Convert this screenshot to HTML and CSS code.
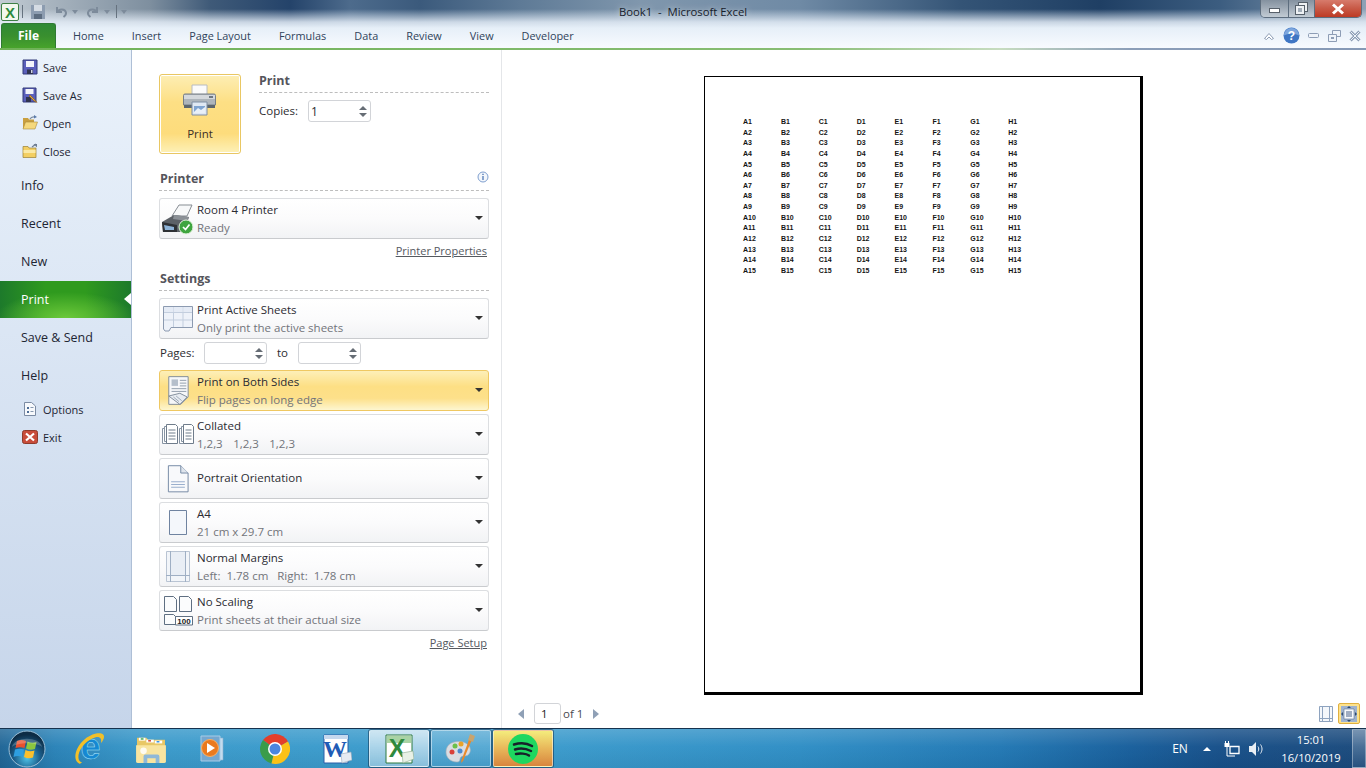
FILE: index.html
```html
<!DOCTYPE html>
<html lang="en">
  <head>
    <meta charset="UTF-8" />
    <meta name="viewport" content="width=device-width, initial-scale=1.0" />
    <title>Book1 - Microsoft Excel</title>
    <link rel="stylesheet" href="styles.css">
  </head>
  <body>
    <div class="window">
      <header class="chrome">
        <div class="titlebar">
          <div class="qat">
            <svg class="qat-logo" width="18" height="18" viewBox="0 0 18 18"><rect x=".5" y=".5" width="17" height="17" rx="1.5" fill="#f2f7ee" stroke="#3d7f45"/><text x="9" y="14.500" text-anchor="middle" class="logo-x">X</text></svg>
            <span class="qat-sep"></span>
            <svg class="qat-save" width="16" height="16" viewBox="0 0 16 16"><path d="M1 1h14v14H1z" fill="#8c9cb0"/><path d="M4 1h8v6H4z" fill="#d5dce4"/><path d="M4 10h8v5H4z" fill="#5d6d80"/></svg>
            <svg class="qat-gap" width="14" height="14" viewBox="0 0 14 14"><path d="M3 2v5h5M3.500 7C5 3.500 11 3.500 12 7.500 12.300 9.500 11 11 9.500 12" fill="none" stroke="#7d8b9b" stroke-width="2"/></svg>
            <span class="qat-caret"></span>
            <svg class="qat-gap" width="14" height="14" viewBox="0 0 14 14"><path d="M11 2v5H6M10.500 7C9 3.500 3 3.500 2 7.500 1.700 9.500 3 11 4.500 12" fill="none" stroke="#7d8b9b" stroke-width="2"/></svg>
            <span class="qat-caret"></span>
            <span class="qat-sep qat-sep-end"></span>
            <span class="qat-caret"></span>
          </div>
          <div class="title-text">Book1 &nbsp;-&nbsp; Microsoft Excel</div>
          <div class="win-buttons">
            <div class="win-btn win-min"><span class="min-bar"></span></div>
            <div class="win-btn win-max"><span class="max-back"></span><span class="max-front"></span></div>
            <div class="win-btn win-close"><svg width="14" height="12" viewBox="0 0 14 12"><path d="M2 1.500l10 9M12 1.500l-10 9" stroke="#fff" stroke-width="3"/></svg></div>
          </div>
        </div>
        <nav class="tabs">
          <div class="file-tab">File</div>
          <div class="tab-list">
            <span>Home</span><span>Insert</span><span>Page Layout</span><span>Formulas</span><span>Data</span><span>Review</span><span>View</span><span>Developer</span>
          </div>
          <div class="ribbon-tools">
            <svg width="12" height="10" viewBox="0 0 12 10"><path d="M1.500 7.500L6 2.500l4.500 5-2 1L6 6 3.500 8.500z" fill="#fff" stroke="#8d9db5"/></svg>
            <svg width="17" height="17" viewBox="0 0 17 17"><circle cx="8.500" cy="8.500" r="8" fill="#3f76c4"/><path d="M1 8.500a7.500 7.500 0 0 1 15 0c-4-2.500-11-2.500-15 0z" fill="#7ea6dd"/><text x="8.500" y="13" text-anchor="middle" class="help-q">?</text></svg>
            <svg width="12" height="8" viewBox="0 0 12 8"><rect x=".5" y="1.500" width="10" height="4" rx="1" fill="#eef3f9" stroke="#8d9db5"/></svg>
            <svg width="13" height="12" viewBox="0 0 13 12"><path d="M4.500.5h8v6h-8z" fill="#eef3f9" stroke="#8d9db5"/><path d="M.5 4.500h8v7h-8z" fill="#eef3f9" stroke="#8d9db5"/><path d="M3 7h3v2H3z" fill="#8d9db5"/></svg>
            <svg width="12" height="12" viewBox="0 0 12 12"><path d="M1.500 1.500l9 9M10.500 1.500l-9 9" stroke="#8d9db5" stroke-width="3"/><path d="M1.500 1.500l9 9M10.500 1.500l-9 9" stroke="#eef3f9"/></svg>
          </div>
        </nav>
      </header>

      <main class="backstage">
        <aside class="side-nav">
          <a class="nav-small"><svg width="16" height="16" viewBox="0 0 16 16"><path d="M1 1h14v14H1z" fill="#5b5fbb" stroke="#333a78"/><path d="M4 2h8v6H4z" fill="#f3f4fa"/><path d="M5 10.500h6V15H5z" fill="#30344f"/><path d="M9 11h1.500v3H9z" fill="#cfd2e6"/></svg>Save</a>
          <a class="nav-small"><svg width="16" height="16" viewBox="0 0 16 16"><path d="M1 1h13v14H1z" fill="#5b5fbb" stroke="#333a78"/><path d="M3.500 2h8v5h-8z" fill="#f3f4fa"/><path d="M4 10h5v5H4z" fill="#30344f"/><path d="M8 8l5 5 2 2.500-3-1.500-5-5z" fill="#e0a63c" stroke="#8a5a1c" stroke-width=".6"/></svg>Save As</a>
          <a class="nav-small"><svg width="16" height="16" viewBox="0 0 16 16"><path d="M1 3h5l1 1.500h5V13H1z" fill="#c99f3f"/><path d="M3.500 7H15.500L13 14H1z" fill="#f5d87c" stroke="#a98a3a" stroke-width=".6"/><path d="M8 4c1-2 3-2.500 5-2" fill="none" stroke="#7a8aa0" stroke-width="1.200"/><path d="M12 0l3 2-3 1.500z" fill="#5a7aa8"/></svg>Open</a>
          <a class="nav-small"><svg width="16" height="16" viewBox="0 0 16 16"><path d="M1 3.500h5L7 5h7v9.500H1z" fill="#f3cf63" stroke="#9a8033" stroke-width=".7"/><path d="M1.500 7h12v3h-12z" fill="#fae9a6"/><path d="M10 4l4-3" stroke="#6e7d92" stroke-width="1.200"/><path d="M11.500 1H15v3.500z" fill="#6e7d92"/></svg>Close</a>
          <a class="nav-big">Info</a>
          <a class="nav-big">Recent</a>
          <a class="nav-big">New</a>
          <a class="nav-big nav-active">Print</a>
          <a class="nav-big">Save &amp; Send</a>
          <a class="nav-big">Help</a>
          <a class="nav-small nav-first"><svg width="16" height="16" viewBox="0 0 16 16"><path d="M2.500 1.500h7l4 3.500v9.500h-11z" fill="#f7f9fc" stroke="#7b8ba3"/><path d="M5 6h2v2H5zM5 10h2v2H5z" fill="#4d6d96"/><path d="M8.500 6.500h3M8.500 10.500h3" stroke="#8798af"/></svg>Options</a>
          <a class="nav-small"><svg width="16" height="16" viewBox="0 0 16 16"><rect x=".5" y="1.500" width="15" height="13" rx="2" fill="#c84c3a" stroke="#8e3b2b"/><path d="M4 4.500l8 7M12 4.500l-8 7" stroke="#fff" stroke-width="2.200"/></svg>Exit</a>
        </aside>

        <section class="options-panel">
          <div class="print-row">
            <button class="print-button" type="button">
              <svg width="34" height="32" viewBox="0 0 34 32"><path d="M9 1h15v10H9z" fill="#fbfbfb" stroke="#b8bcc2"/><path d="M2 10h29a1.500 1.500 0 0 1 1.500 1.500V21H.5v-9.500A1.500 1.500 0 0 1 2 10z" fill="#aeb5bb" stroke="#777f86"/><path d="M1 11h31v4H1z" fill="#d4d8dc"/><path d="M1 21h31v3H1z" fill="#5d666d"/><path d="M26 12h4v2h-4z" fill="#6d7780"/><path d="M9 18h15v13H9z" fill="#dfe8f3" stroke="#7e8ea3"/><path d="M11 22h11v7H11z" fill="#7fa4d1"/><path d="M11 28l4-4 3 2 4-3v6H11z" fill="#e9f0f8"/></svg>
              <span>Print</span>
            </button>
            <div class="print-side">
              <h3 class="section-title">Print</h3>
              <div class="copies-row">
                <label>Copies:</label>
                <div class="spin-box"><span class="spin-value">1</span><span class="spin-arrows"><i class="up"></i><i class="down"></i></span></div>
              </div>
            </div>
          </div>

          <h3 class="section-title title-info section-printer">Printer
            <svg width="12" height="12" viewBox="0 0 12 12"><circle cx="6" cy="6" r="5" fill="#f3f7fc" stroke="#7f9fcf"/><path d="M6 5v4" stroke="#4f78b5" stroke-width="1.300"/><path d="M5.300 2.700h1.400V4H5.300z" fill="#4f78b5"/></svg>
          </h3>
          <div class="drop drop-first">
            <span class="drop-slot"><svg width="34" height="32" viewBox="0 0 34 32"><path d="M11 13L18 2h13l-5 11z" fill="#f7f8f9" stroke="#878d93"/><path d="M1 19l12-7 15 2-3 9-5 6H2z" fill="#5c6167"/><path d="M1 19l15 3v7H2z" fill="#2e3135"/><path d="M3 22l10 2v3H4z" fill="#8db3d8"/><path d="M13 12l15 2-2 4-14-2z" fill="#8b9096"/><circle cx="25" cy="24" r="7" fill="#3fa53f" stroke="#e4f2de"/><path d="M22 24l2.500 2.500 4-5" fill="none" stroke="#fff" stroke-width="1.700"/></svg></span>
            <div class="drop-text"><b>Room 4 Printer</b><small>Ready</small></div>
            <span class="caret"></span>
          </div>
          <div class="link-row"><a>Printer Properties</a></div>

          <h3 class="section-title section-settings">Settings</h3>
          <div class="drop drop-first">
            <span class="drop-slot"><svg width="30" height="26" viewBox="0 0 30 26"><path d="M.5.500h29v21H8l-2 3.500H2l-1.500-2z" fill="#eef2f9" stroke="#8c9ab0"/><path d="M1 6.500h28M1 14h28M10.500 1v20M20 1v20" stroke="#c3cede"/><path d="M1 1h28v5H1z" fill="#dfe6f1" opacity=".6"/></svg></span>
            <div class="drop-text"><b>Print Active Sheets</b><small>Only print the active sheets</small></div>
            <span class="caret"></span>
          </div>
          <div class="pages-row">
            <label>Pages:</label>
            <div class="spin-box"><span class="spin-value"></span><span class="spin-arrows"><i class="up"></i><i class="down"></i></span></div>
            <label class="to-label">to</label>
            <div class="spin-box"><span class="spin-value"></span><span class="spin-arrows"><i class="up"></i><i class="down"></i></span></div>
          </div>
          <div class="drop drop-hot">
            <span class="drop-slot"><svg width="24" height="31" viewBox="0 0 26 32"><path d="M3 1h21v22l-8 8H3z" fill="#f6f7f9" stroke="#7c8896"/><path d="M6 4h7v7H6z" fill="#b5bfcb"/><path d="M15 5h7M15 8h7M15 11h7M6 14h16M6 17h16" stroke="#8d99a8"/><path d="M3 22l12-3 8 4-8 8z" fill="#e8ecf1" stroke="#7c8896"/><path d="M8 23l6 5M11 22l6 5" stroke="#9aa6b5"/></svg></span>
            <div class="drop-text"><b>Print on Both Sides</b><small>Flip pages on long edge</small></div>
            <span class="caret"></span>
          </div>
          <div class="drop">
            <span class="drop-slot"><svg width="32" height="22" viewBox="0 0 32 22"><path d="M.5 4.500h11v15H.5z" fill="#fff" stroke="#8794a3"/><path d="M2.500 2.500h11v15h-11z" fill="#fff" stroke="#8794a3"/><path d="M4.500.5h9l2 2v17h-11z" fill="#fff" stroke="#6f7c8b"/><path d="M6.500 6h7M6.500 9h7M6.500 12h7M6.500 15h7" stroke="#6f7c8b"/><path d="M17.500 4.500h9v15h-9z" fill="#fff" stroke="#8794a3"/><path d="M19.500 2.500h9v15h-9z" fill="#fff" stroke="#8794a3"/><path d="M21.500.5h8l2 2v17h-10z" fill="#fff" stroke="#6f7c8b"/><path d="M23.500 6h6M23.500 9h6M23.500 12h6M23.500 15h6" stroke="#6f7c8b"/></svg></span>
            <div class="drop-text"><b>Collated</b><small class="collated">1,2,3 &nbsp; 1,2,3 &nbsp; 1,2,3</small></div>
            <span class="caret"></span>
          </div>
          <div class="drop">
            <span class="drop-slot"><svg width="22" height="30" viewBox="0 0 24 30"><path d="M1.500.5H15l8 8v20.500H1.500z" fill="#f8f9fb" stroke="#6f83a0"/><path d="M15 .5v8h8" fill="#dfe5ed" stroke="#6f83a0"/><path d="M4.500 18h15M4.500 21h15M4.500 24h15" stroke="#90a7c8"/></svg></span>
            <div class="drop-text drop-single"><b>Portrait Orientation</b></div>
            <span class="caret"></span>
          </div>
          <div class="drop">
            <span class="drop-slot"><svg width="18" height="25" viewBox="0 0 18 25"><path d="M.5.5h17v24H.5z" fill="#f4f7fb" stroke="#6f83a0"/></svg></span>
            <div class="drop-text"><b>A4</b><small>21 cm x 29.7 cm</small></div>
            <span class="caret"></span>
          </div>
          <div class="drop">
            <span class="drop-slot"><svg width="24" height="31" viewBox="0 0 24 31"><path d="M.5.500h23v30H.5z" fill="#f2f5f9" stroke="#b9c4d3"/><path d="M5 1h14v23H5z" fill="#e9eef5"/><path d="M4.500 0v31M19.500 0v31M0 24.500h24" stroke="#9fafc4"/></svg></span>
            <div class="drop-text"><b>Normal Margins</b><small>Left: &nbsp;1.78 cm &nbsp; Right: &nbsp;1.78 cm</small></div>
            <span class="caret"></span>
          </div>
          <div class="drop">
            <span class="drop-slot"><svg width="29" height="30" viewBox="0 0 29 30"><path d="M.5.500h9l3 3v12H.5zM15.500.500h9l3 3v12h-12zM.5 18.500h9l3 3v7H.5z" fill="#fbfcfd" stroke="#5f6f82"/><path d="M11.500 20.500h17v8.500h-17z" fill="#fff" stroke="#5f6f82"/><text x="20" y="28" text-anchor="middle" class="scale-text">100</text></svg></span>
            <div class="drop-text"><b>No Scaling</b><small>Print sheets at their actual size</small></div>
            <span class="caret"></span>
          </div>
          <div class="link-row"><a>Page Setup</a></div>
        </section>

        <section class="preview">
          <div class="sheet">
            <div class="cells">
              <span>A1</span><span>B1</span><span>C1</span><span>D1</span><span>E1</span><span>F1</span><span>G1</span><span>H1</span>
              <span>A2</span><span>B2</span><span>C2</span><span>D2</span><span>E2</span><span>F2</span><span>G2</span><span>H2</span>
              <span>A3</span><span>B3</span><span>C3</span><span>D3</span><span>E3</span><span>F3</span><span>G3</span><span>H3</span>
              <span>A4</span><span>B4</span><span>C4</span><span>D4</span><span>E4</span><span>F4</span><span>G4</span><span>H4</span>
              <span>A5</span><span>B5</span><span>C5</span><span>D5</span><span>E5</span><span>F5</span><span>G5</span><span>H5</span>
              <span>A6</span><span>B6</span><span>C6</span><span>D6</span><span>E6</span><span>F6</span><span>G6</span><span>H6</span>
              <span>A7</span><span>B7</span><span>C7</span><span>D7</span><span>E7</span><span>F7</span><span>G7</span><span>H7</span>
              <span>A8</span><span>B8</span><span>C8</span><span>D8</span><span>E8</span><span>F8</span><span>G8</span><span>H8</span>
              <span>A9</span><span>B9</span><span>C9</span><span>D9</span><span>E9</span><span>F9</span><span>G9</span><span>H9</span>
              <span>A10</span><span>B10</span><span>C10</span><span>D10</span><span>E10</span><span>F10</span><span>G10</span><span>H10</span>
              <span>A11</span><span>B11</span><span>C11</span><span>D11</span><span>E11</span><span>F11</span><span>G11</span><span>H11</span>
              <span>A12</span><span>B12</span><span>C12</span><span>D12</span><span>E12</span><span>F12</span><span>G12</span><span>H12</span>
              <span>A13</span><span>B13</span><span>C13</span><span>D13</span><span>E13</span><span>F13</span><span>G13</span><span>H13</span>
              <span>A14</span><span>B14</span><span>C14</span><span>D14</span><span>E14</span><span>F14</span><span>G14</span><span>H14</span>
              <span>A15</span><span>B15</span><span>C15</span><span>D15</span><span>E15</span><span>F15</span><span>G15</span><span>H15</span>
            </div>
          </div>
          <div class="preview-footer">
            <div class="pager">
              <i class="page-prev"></i>
              <span class="page-input">1</span>
              <span>of 1</span>
              <i class="page-next"></i>
            </div>
            <div class="view-icons">
              <svg width="14" height="16" viewBox="0 0 14 16"><path d="M.5.5h13v15H.5z" fill="#f4f7fb" stroke="#8ea3bf"/><path d="M3.500 0v16M10.500 0v16M0 12.500h14" stroke="#8ea3bf"/></svg>
              <div class="view-active"><svg width="18" height="16" viewBox="0 0 18 16"><path d="M1 0h16v16H1z" fill="#9eb2ce"/><path d="M4 3h10v10H4z" fill="#f7f9fc" stroke="#5d7292" stroke-width=".6"/><path d="M6 6h6M6 8h6M6 10h6" stroke="#4a6388"/><path d="M9 0l2 2H7zM9 16l2-2H7zM1 8l2-2v4zM17 8l-2-2v4z" fill="#2f4a6f"/></svg></div>
            </div>
          </div>
        </section>
      </main>

      <footer class="taskbar">
        <div class="start-orb">
          <svg width="38" height="38" viewBox="0 0 38 38"><defs><radialGradient id="orb" cx="50%" cy="75%" r="65%"><stop offset="0" stop-color="#4fc3e8"/><stop offset=".55" stop-color="#1c5f8c"/><stop offset="1" stop-color="#0d2c45"/></radialGradient></defs><circle cx="19" cy="19" r="18" fill="url(#orb)" stroke="#9cc0d8"/><path d="M9 11c3-1.500 6-1.500 9 0l-1.500 7c-3-1-6-1-9 0z" fill="#e8502e"/><path d="M19.500 11.500c3 1.500 6 1.500 9 .5L27 19c-3 1-6 1-9-.5z" fill="#8cc63f"/><path d="M7 19.500c3-1 6-1 9 0L14.500 27c-3-1.500-6-1.500-9 0z" fill="#2e9ee0"/><path d="M17.500 20c3 1.500 6 1.500 9 .5L25 27.500c-3 1-6 1-9-.5z" fill="#fbc02d"/><path d="M4 17C6 6 32 6 34 17 28 12 10 12 4 17z" fill="#fff" opacity=".22"/></svg>
        </div>
        <div class="pin">
          <svg class="ie-icon" width="30" height="31" viewBox="0 0 30 31"><text x="16.500" y="26" text-anchor="middle" class="ie-e">e</text><path d="M5 30.500C-2 26 2 13 11 6 19-.5 28-1 29.500 2 31 4 29 8 27 10 28 6 26 3 21 4.500 14 6.500 6 14 4.500 22 4 26 5 28.500 8 29.500 7 30.500 6 31 5 30.500z" fill="#f2c029"/></svg>
        </div>
        <div class="pin">
          <svg width="32" height="28" viewBox="0 0 32 30"><path d="M1 3h10l2 2h18v23H1z" fill="#e8c766"/><path d="M3 3h7v3H3z" fill="#fff"/><path d="M5 3.500h3v1.500H5z" fill="#3aa64a"/><path d="M11 5h8v3h-8z" fill="#fff"/><path d="M13 5.500h3V7h-3z" fill="#d23a2a"/><path d="M20 6h8v3h-8z" fill="#fff"/><path d="M22 6.500h3V8h-3z" fill="#2e8de0"/><path d="M0 11h32v17a2 2 0 0 1-2 2H2a2 2 0 0 1-2-2z" fill="#f8e4a0"/><path d="M8 30v-7a2 2 0 0 1 2-2h13a2 2 0 0 1 2 2v7h-4v-5H12v5z" fill="#8fb8d8"/><circle cx="8" cy="17" r="3.500" fill="#fff" opacity=".85"/></svg>
        </div>
        <div class="pin">
          <svg width="26" height="28" viewBox="0 0 26 28"><path d="M18 3h5v22h-5z" fill="#c4dcee" stroke="#8ab0cc" stroke-width=".6"/><path d="M1 1h19v25H1z" fill="#74a7d0" stroke="#a9cce6"/><circle cx="10" cy="13" r="8.500" fill="#ea7a1f" stroke="#f7b066"/><path d="M7 8l8 5-8 5z" fill="#fff"/></svg>
        </div>
        <div class="pin">
          <svg width="30" height="30" viewBox="0 0 30 30"><path d="M15 15L28 7.500A15 15 0 0 0 3 6z" fill="#e33e2b"/><path d="M15 15L3 6a15 15 0 0 0 8.500 23.500z" fill="#3a9c4a"/><path d="M15 15L11.500 29.500A15 15 0 0 0 28 7.500z" fill="#fbc116"/><circle cx="15" cy="15" r="7" fill="#fff"/><circle cx="15" cy="15" r="5.500" fill="#4a86e0"/></svg>
        </div>
        <div class="pin">
          <svg width="30" height="30" viewBox="0 0 30 30"><path d="M2 1h24v28H2z" fill="#fff" stroke="#2a5fa8"/><path d="M2 1h24v4H2z" fill="#c5d8ee"/><text x="13" y="23" text-anchor="middle" class="word-w">W</text><path d="M19 20l10-2 1 8-10 3z" fill="#e6ebf2" stroke="#9aa8b8" stroke-width=".6"/></svg>
        </div>
        <div class="pin pin-box pin-active">
          <svg width="30" height="30" viewBox="0 0 30 30"><path d="M2 1h26v28H2z" fill="#fff" stroke="#2d7a3f"/><path d="M3 2h24v7H3z" fill="#a9d3a4"/><text x="13" y="23" text-anchor="middle" class="excel-x">X</text><path d="M18 19l11-2 1 8-11 4z" fill="#e9f1e6" stroke="#8aa98c" stroke-width=".6"/></svg>
        </div>
        <div class="pin pin-box">
          <svg width="32" height="30" viewBox="0 0 32 30"><path d="M1 18C1 9 10 6 18 8c7 2 9 8 6 12-2 3-6 1-8 3-2 2 0 5-4 5C6 28 1 24 1 18z" fill="#d9dde2" stroke="#aab0b7" stroke-width=".6"/><circle cx="7" cy="18" r="2.500" fill="#d8403a"/><circle cx="10" cy="12" r="2.500" fill="#6cc04a"/><circle cx="16" cy="10" r="2.500" fill="#e8a32a"/><circle cx="15" cy="17" r="2.500" fill="#4a8ad0"/><path d="M28 3L18 27l-2 2 .5-3L25 3z" fill="#e8892a"/><path d="M25 0l5 2-2 6-5-2z" fill="#c9a46e"/></svg>
        </div>
        <div class="pin pin-box pin-spotify">
          <svg width="30" height="30" viewBox="0 0 30 30"><circle cx="15" cy="15" r="15" fill="#1ed760"/><path d="M6 10.500c6-2 13-1.500 18 1.500M7 15.500c5-1.500 11-1 16 1.500M8 20c4-1 10-.5 13 1.500" fill="none" stroke="#17202a" stroke-width="2.500" stroke-linecap="round"/></svg>
        </div>
        <div class="tray">
          <span class="tray-lang">EN</span>
          <span class="tray-arrow"><i></i></span>
          <span class="tray-icon"><svg width="16" height="16" viewBox="0 0 16 16"><path d="M6 5.500h9v7H6z" fill="none" stroke="#fff" stroke-width="1.300"/><path d="M1.500 0v2M4.500 0v2" stroke="#fff"/><path d="M.5 2h5v4h-5z" fill="#fff"/><path d="M3 6v9h8" fill="none" stroke="#fff"/></svg></span>
          <span class="tray-icon"><svg width="16" height="16" viewBox="0 0 16 16"><path d="M1 5h3l4-4v14l-4-4H1z" fill="#e8eef4"/><path d="M10 5.500c1 1.500 1 3.500 0 5M12.500 3.500c2 3 2 6 0 9" fill="none" stroke="#e8eef4"/></svg></span>
          <span class="clock"><span>15:01</span><span>16/10/2019</span></span>
          <span class="show-desktop"></span>
        </div>
      </footer>
    </div>
  </body>
</html>
```
FILE: styles.css
```css
* {
  box-sizing: border-box;
}

html,
body {
  margin: 0;
  height: 100%;
  overflow: hidden;
}

body {
  font-family: "Open Sans", "Noto Sans", sans-serif;
  font-size: 11.5px;
  color: #2c2c30;
  background: #fff;
}

a {
  color: inherit;
}

.window {
  display: flex;
  flex-direction: column;
  width: 1366px;
  height: 768px;
}

/* title bar and tabs */

.chrome {
  height: 50px;
  flex: none;
  background:
    linear-gradient(to bottom, rgba(232, 240, 249, 0) 9px, rgba(228, 237, 247, 0.85) 22px, #e6eff8 28px, #f7fafe 47px),
    linear-gradient(to right, #c3ccd4 0, #a8b4bf 50px, #7e8f9f 150px, #3f5a78 210px, #24436a 290px, #4d6b8c 350px, #3b5a7c 420px, #5e7a96 520px, #8097ad 640px, #6f8aa5 800px, #345476 960px, #1f3f64 1100px, #3c5d80 1220px, #8ea2b6 1366px);
}

.titlebar {
  display: grid;
  grid-template-columns: 1fr auto 1fr;
  height: 23px;
}

.qat {
  display: flex;
  align-items: center;
  padding: 2px 0 0 1px;
  height: 21px;
}

.qat-sep {
  width: 1px;
  height: 13px;
  margin-left: 3px;
  background: #66727f;
}

.qat-sep-end {
  margin-left: 6px;
}

.qat-save {
  margin-left: 7px;
}

.qat-gap {
  margin-left: 8px;
}

.qat-caret {
  width: 0;
  height: 0;
  margin-left: 4px;
  border: 3px solid transparent;
  border-top: 4px solid #7d8b9b;
  border-bottom: 0;
}

.logo-x {
  font: bold 15px "Liberation Sans", sans-serif;
  fill: #2c8a3c;
}

.title-text {
  color: #16202b;
  font-size: 11.3px;
  line-height: 23px;
  text-shadow: 0 0 6px rgba(255, 255, 255, 0.7);
}

.win-buttons {
  justify-self: end;
  display: flex;
  height: 18px;
  margin-right: 4px;
  border: 1px solid #5d6d7e;
  border-top: 0;
  border-radius: 0 0 5px 5px;
  overflow: hidden;
}

.win-btn {
  display: flex;
  align-items: center;
  justify-content: center;
  position: relative;
}

.win-min {
  width: 28px;
  background: linear-gradient(#84919f, #9faab6 45%, #c2cbd4);
  border-right: 1px solid #5d6d7e;
}

.win-max {
  width: 26px;
  background: linear-gradient(#84919f, #9faab6 45%, #c2cbd4);
  border-right: 1px solid #5d6d7e;
}

.win-close {
  width: 46px;
  background: linear-gradient(#d77b6c, #c95c49 45%, #bd3a24);
}

.min-bar {
  width: 11px;
  height: 5px;
  margin-top: 3px;
  background: #fff;
  border: 1px solid #57606a;
}

.max-back,
.max-front {
  position: absolute;
  width: 8px;
  height: 8px;
  border: 2px solid #eef1f4;
  outline: 1px solid #56606a;
}

.max-back {
  left: 10px;
  top: 3px;
}

.max-front {
  left: 7px;
  top: 6px;
  background: #a2adb8;
}

.tabs {
  display: flex;
  align-items: flex-end;
  height: 27px;
  border-bottom: 2px solid;
  border-image: linear-gradient(to right, #6fb257 0, #88bd73 800px, #c7dcc0 1000px, #8c9eb8 1130px, #8599b6 1366px) 1;
}

.file-tab {
  width: 55px;
  height: 25px;
  margin-left: 1px;
  color: #fff;
  font-weight: 700;
  font-size: 12px;
  line-height: 24px;
  text-align: center;
  border: 1px solid #2f7a33;
  border-bottom: 0;
  border-radius: 3px 3px 0 0;
  background: linear-gradient(#2f8a35, #398f2f 50%, #47a32b);
}

.tab-list {
  display: flex;
  gap: 28px;
  margin-left: 17px;
  color: #30435a;
  font-size: 10.9px;
  line-height: 24px;
}

.ribbon-tools {
  display: flex;
  align-items: center;
  gap: 8px;
  margin-left: auto;
  margin-right: 5px;
  height: 25px;
}

.help-q {
  font: bold 12px "Liberation Sans", sans-serif;
  fill: #fff;
}

/* backstage */

.backstage {
  display: flex;
  flex: 1;
  min-height: 0;
}

.side-nav {
  display: flex;
  flex-direction: column;
  width: 132px;
  flex: none;
  padding-top: 4px;
  border-right: 1px solid #aebfd6;
  background: linear-gradient(#eaf2fb, #c6d5ea);
}

.nav-small {
  display: flex;
  align-items: center;
  gap: 5px;
  height: 28px;
  padding: 0 0 2px 22px;
  font-size: 11px;
  color: #1d2533;
}

.nav-first {
  margin-top: 2px;
}

.nav-big {
  position: relative;
  height: 38px;
  padding-left: 21px;
  font-size: 12.5px;
  line-height: 40px;
  color: #1d2533;
}

.nav-active {
  height: 37px;
  margin-top: 1px;
  color: #fff;
  line-height: 38px;
  background:
    radial-gradient(ellipse 70px 26px at 50% 100%, #6cc93a, rgba(108, 201, 58, 0) 100%),
    linear-gradient(to right, #1d7a2b, #2f9a1e 35%, #2f9a1e 65%, #1d7a2b);
}

.nav-active::after {
  content: "";
  position: absolute;
  right: 0;
  top: 12px;
  border: 6px solid transparent;
  border-left: 0;
  border-right: 7px solid #fff;
}

.options-panel {
  width: 370px;
  flex: none;
  padding: 24px 12px 0 27px;
  border-right: 1px solid #e4e6e9;
}

.print-row {
  display: flex;
  gap: 18px;
}

.print-button {
  display: flex;
  flex-direction: column;
  align-items: center;
  width: 82px;
  height: 80px;
  padding: 9px 0 0;
  font: inherit;
  color: #3c2f28;
  border: 1px solid #e9c763;
  border-radius: 3px;
  background: linear-gradient(#fdeeb4, #fddf84 35%, #fddc7c 75%, #fdf1b8);
  box-shadow: 0 0 0 1px #fff inset;
}

.print-button span {
  margin-top: 10px;
}

.print-side {
  flex: 1;
  margin-top: -2px;
}

.section-title {
  margin: 0;
  height: 21px;
  padding: 1px 0 3px;
  color: #55555c;
  font-size: 12.5px;
  font-weight: 700;
  line-height: 16px;
  border-bottom: 1px dashed #bdbdbd;
}

.section-printer {
  margin-top: 16px;
}

.section-settings {
  margin-top: 11px;
  padding-left: 1px;
}

.title-info {
  display: flex;
  justify-content: space-between;
  align-items: flex-start;
  padding-left: 1px;
}

.copies-row {
  display: flex;
  align-items: center;
  gap: 10px;
  margin-top: 7px;
}

.copies-row label,
.pages-row label {
  padding-bottom: 2px;
}

.spin-box {
  display: flex;
  align-items: center;
  justify-content: space-between;
  width: 63px;
  height: 22px;
  padding: 0 3px 0 2px;
  background: #fff;
  border: 1px solid #d2d4d8;
  border-radius: 3px;
}

.spin-value {
  font-size: 12px;
}

.spin-arrows {
  display: flex;
  flex-direction: column;
  gap: 3px;
}

.spin-arrows i {
  display: block;
  width: 0;
  height: 0;
  border: 4px solid transparent;
}

.spin-arrows .up {
  border-top: 0;
  border-bottom: 4px solid #666d75;
}

.spin-arrows .down {
  border-bottom: 0;
  border-top: 4px solid #666d75;
}

.drop {
  display: flex;
  align-items: center;
  height: 41px;
  margin-top: 3px;
  padding-right: 5px;
  border: 1px solid #dcdee1;
  border-bottom-color: #c9cbce;
  border-radius: 3px;
  background: linear-gradient(#fff, #fbfbfc 50%, #f2f3f5);
}

.drop-first {
  margin-top: 7px;
}

.drop-hot {
  margin-top: 6px;
  border-color: #efc862;
  background: linear-gradient(#fdefb8, #fddf84 40%, #fde08a 70%, #fdf6d0);
}

.drop-slot {
  display: flex;
  justify-content: center;
  width: 36px;
  flex: none;
}

.drop-text {
  display: flex;
  flex-direction: column;
  margin: 1px 0 0 1px;
  line-height: 18px;
}

.drop-single {
  margin-top: -1px;
}

.drop-text b {
  font-weight: 400;
  color: #2b2b32;
}

.drop-text small {
  font-size: inherit;
  color: #72747a;
}

.collated {
  word-spacing: 0.5px;
}

.caret {
  width: 0;
  height: 0;
  margin: 0 0 2px auto;
  border: 4px solid transparent;
  border-top: 4px solid #333;
  border-bottom: 0;
}

.link-row {
  height: 16px;
  margin-top: 4px;
  padding-right: 2px;
  color: #55595f;
  font-size: 11px;
  line-height: 16px;
  text-align: right;
}

.link-row a {
  text-decoration: underline;
}

.pages-row {
  display: flex;
  align-items: center;
  height: 22px;
  margin-top: 3px;
  padding-left: 1px;
}

.pages-row label {
  width: 44px;
}

.pages-row .to-label {
  width: 31px;
  padding-left: 10px;
}

/* page preview */

.preview {
  display: flex;
  flex-direction: column;
  flex: 1;
  padding: 26px 6px 4px 16px;
}

.sheet {
  width: 439px;
  height: 619px;
  margin-left: 186px;
  padding: 40px 0 0 38px;
  background: #fff;
  border: solid #000;
  border-width: 1px 3px 3px 1px;
}

.cells {
  display: grid;
  grid-template-columns: repeat(8, 37.9px);
  grid-auto-rows: 10.65px;
  color: #141414;
  font-family: "Liberation Sans", sans-serif;
  font-size: 7px;
  font-weight: 700;
  line-height: 10.65px;
}

.preview-footer {
  display: flex;
  align-items: center;
  justify-content: space-between;
  margin-top: auto;
  height: 21px;
}

.pager {
  display: flex;
  align-items: center;
  gap: 2px;
  color: #4a4a50;
  font-size: 11.5px;
}

.page-input {
  width: 27px;
  height: 21px;
  margin-left: 8px;
  padding-left: 6px;
  line-height: 20px;
  color: #222;
  background: #fff;
  border: 1px solid #d2d4d8;
  border-radius: 3px;
}

.page-prev,
.page-next {
  width: 0;
  height: 0;
  border: 5px solid transparent;
}

.page-prev {
  border-left: 0;
  border-right: 6px solid #8fa0b6;
}

.page-next {
  margin-left: 8px;
  border-right: 0;
  border-left: 6px solid #8fa0b6;
}

.view-icons {
  display: flex;
  align-items: center;
  gap: 5px;
}

.view-active {
  display: flex;
  align-items: center;
  justify-content: center;
  width: 22px;
  height: 21px;
  border: 1px solid #e0b040;
  border-radius: 2px;
  background: #fde28c;
}

/* taskbar */

.taskbar {
  display: flex;
  flex: none;
  height: 40px;
  color: #fff;
  border-top: 1px solid #16324e;
  background:
    linear-gradient(rgba(255, 255, 255, 0.16), rgba(255, 255, 255, 0.02) 45%, rgba(0, 0, 0, 0.05)),
    linear-gradient(to right, #1f6596 0, #2a83b8 55px, #3a9acb 150px, #3c9ccd 520px, #2f8ec5 800px, #2278b4 1000px, #185f9c 1130px, #17508a 1220px, #1b4a7c 1366px);
}

.start-orb {
  display: flex;
  align-items: center;
  justify-content: center;
  width: 54px;
  flex: none;
}

.start-orb + .pin {
  margin-left: 4px;
}

.pin {
  display: flex;
  align-items: center;
  justify-content: center;
  width: 62px;
  flex: none;
}

.pin-box {
  width: 60px;
  margin: 1px;
  border: 1px solid rgba(255, 255, 255, 0.5);
  border-radius: 2px;
  background: linear-gradient(rgba(255, 255, 255, 0.2), rgba(255, 255, 255, 0.06));
  box-shadow: 0 0 0 1px rgba(10, 40, 70, 0.5);
}

.pin-active {
  background: linear-gradient(rgba(255, 255, 255, 0.7), rgba(255, 255, 255, 0.4));
}

.pin-spotify {
  background: linear-gradient(#f4ec7c, #e8b75a 50%, #d8853e);
}

.ie-icon {
  overflow: visible;
}

.ie-e {
  font: bold 36px "Liberation Sans", sans-serif;
  fill: #1688d2;
  stroke: #a8e2f7;
  stroke-width: 0.5px;
}

.word-w {
  font: bold 24px "Liberation Serif", serif;
  fill: #1f5bb5;
}

.excel-x {
  font: bold 25px "Liberation Sans", sans-serif;
  fill: #2f8a3e;
}

.scale-text {
  font: 700 8px "Liberation Sans", sans-serif;
  fill: #222;
}

.tray {
  display: flex;
  align-items: center;
  margin-left: auto;
  height: 100%;
}

.tray-lang {
  width: 28px;
  text-align: center;
  font-size: 12px;
}

.tray-arrow {
  display: flex;
  justify-content: center;
  width: 26px;
}

.tray-arrow i {
  width: 0;
  height: 0;
  border: 4px solid transparent;
  border-top: 0;
  border-bottom: 4px solid #fff;
}

.tray-icon {
  display: flex;
  justify-content: center;
  width: 24px;
}

.clock {
  display: flex;
  flex-direction: column;
  align-items: center;
  width: 72px;
  margin: 0 5px 0 7px;
  font-size: 11.2px;
  line-height: 18px;
}

.show-desktop {
  width: 14px;
  height: 100%;
  border: 1px solid rgba(255, 255, 255, 0.35);
  background: linear-gradient(rgba(255, 255, 255, 0.3), rgba(255, 255, 255, 0.06));
}
```
